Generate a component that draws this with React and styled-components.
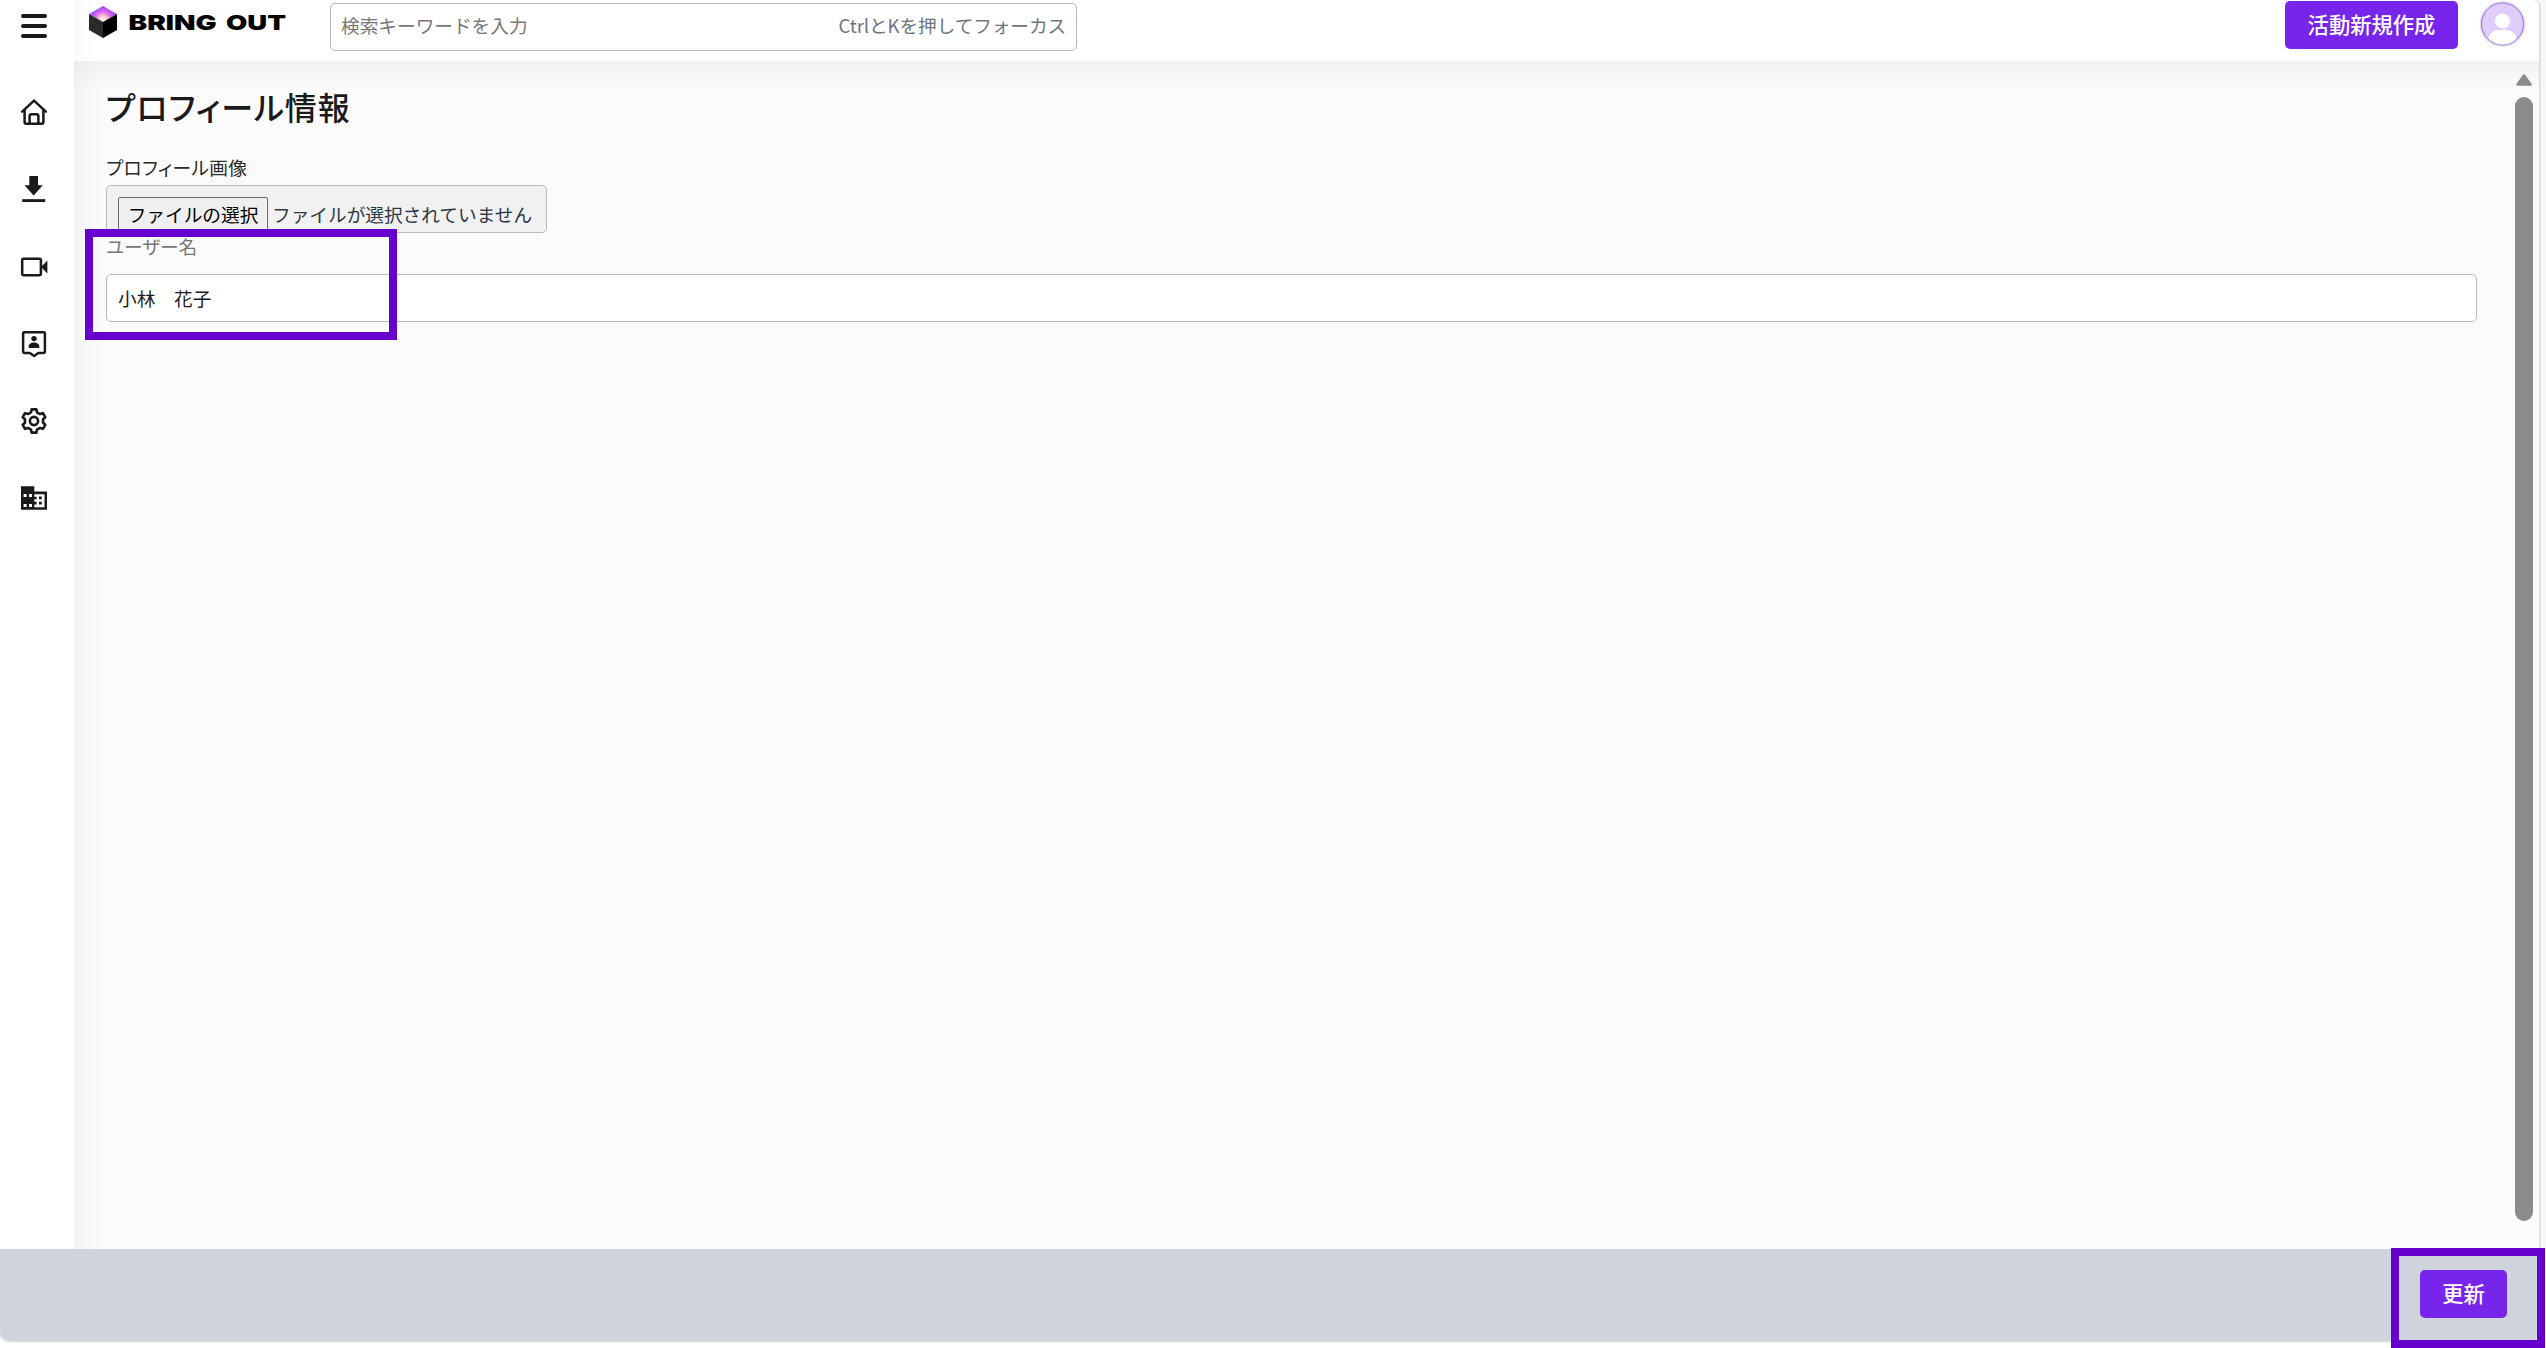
import React from "react";
import styled, { createGlobalStyle } from "styled-components";

const GlobalStyle = createGlobalStyle`
  * { box-sizing: border-box; }
  html, body { margin: 0; padding: 0; background: #fff; }
  body, input, button {
    font-family: "Noto Sans CJK JP", "Noto Sans", sans-serif;
  }
  body { overflow: hidden; }
`;

const Page = styled.div`
  position: relative;
  width: 2546px;
  height: 1348px;
  overflow: hidden;
  background: linear-gradient(90deg, #fff 2539px, #f7f7f7 2539px);
`;

const Shell = styled.div`
  display: flex;
  flex-direction: column;
  width: 2539px;
  height: 1341px;
  overflow: hidden;
  background: #fff;
  border-radius: 0 6px 10px 10px;
  box-shadow: 0 0 2px 1px rgba(0, 0, 0, 0.18);
`;

const Body = styled.div`
  display: flex;
  height: 1249px;
`;

const Sidebar = styled.nav`
  display: flex;
  flex-direction: column;
  align-items: center;
  width: 74px;
  padding: 11px 6px 0 0;
  color: #1a1a1a;
`;

const NavItem = styled.a`
  display: flex;
  flex: none;
  margin-top: ${(p) => p.$gap}px;
  svg { display: block; }
`;

const Main = styled.div`
  display: flex;
  flex-direction: column;
  flex: 1;
`;

const Header = styled.header`
  display: flex;
  align-items: flex-start;
  height: 61px;
  background: linear-gradient(90deg, #fbfbfb, #fff 26px);
`;

const Logo = styled.a`
  display: block;
  margin: 5px 0 0 14px;
  width: 242px;
  height: 36px;
  svg { display: block; }
`;

const SearchBox = styled.div`
  display: flex;
  align-items: center;
  justify-content: space-between;
  width: 747px;
  height: 48px;
  margin-top: 3px;
  padding: 0 10px;
  border: 1px solid #b9b9b9;
  border-radius: 5px;
  background: #fff;
`;

const Hint = styled.span`
  font-size: 18.67px;
  line-height: 42px;
  padding-bottom: 4px;
  letter-spacing: ${(p) => p.$track}px;
  color: ${(p) => p.$color};
  white-space: nowrap;
`;

const Button = styled.button`
  display: flex;
  align-items: center;
  justify-content: center;
  width: ${(p) => p.$w}px;
  height: 48px;
  padding: 0 0 4px;
  border: 0;
  border-radius: 5px;
  background: #7724eb;
  color: #fff;
  font-size: 21.3px;
  font-weight: 500;
  white-space: nowrap;
`;

const HeaderActions = styled.div`
  display: flex;
  gap: 21px;
  margin-left: auto;
  padding: 1px 13px 0 0;
  svg { display: block; }
`;

const Content = styled.main`
  display: flex;
  flex: 1;
  background:
    linear-gradient(180deg, rgba(0, 0, 0, 0.035), transparent 30px),
    linear-gradient(90deg, rgba(0, 0, 0, 0.03), transparent 28px),
    #fbfbfb;
`;

const Form = styled.form`
  display: flex;
  flex-direction: column;
  align-items: flex-start;
  width: 2404px;
  padding: 22px 0 0 32px;
`;

const Title = styled.h1`
  margin: 0;
  height: 46px;
  font-size: 32px;
  line-height: 46px;
  font-weight: 500;
  font-feature-settings: "palt" 1;
  letter-spacing: 1px;
  color: #1a1a1a;
  white-space: nowrap;
`;

const Label = styled.label`
  height: 28px;
  margin-top: ${(p) => p.$top}px;
  font-size: 18.67px;
  line-height: 28px;
  font-feature-settings: "palt" 1;
  letter-spacing: ${(p) => p.$track || 0}px;
  color: ${(p) => p.$color};
  white-space: nowrap;
`;

const FileField = styled.div`
  display: flex;
  width: 441px;
  height: 48px;
  margin-top: 4px;
  padding: 11px 0 0 11px;
  overflow: hidden;
  border: 1px solid #b9b9b9;
  border-radius: 5px;
  background: #f1f1f1;
`;

const FileButton = styled.span`
  flex: none;
  width: 150px;
  height: 40px;
  border: 1px solid #6b6b6b;
  border-radius: 2px;
  background: #efefef;
  color: #000;
  font-size: 18.67px;
  line-height: 32px;
  text-align: center;
  white-space: nowrap;
`;

const FileStatus = styled.span`
  margin-left: 4px;
  padding-top: 1px;
  font-size: 18.67px;
  line-height: 32px;
  color: #2b3947;
  white-space: nowrap;
`;

const TextInput = styled.input`
  width: 2371px;
  height: 48px;
  margin-top: 14px;
  padding: 0 11px 1px;
  border: 1px solid #b9b9b9;
  border-radius: 5px;
  background: #fff;
  color: #1a1a1a;
  font-size: 18.67px;
  outline: 0;
`;

const ScrollTrack = styled.div`
  display: flex;
  flex-direction: column;
  align-items: center;
  width: 18px;
  margin-left: 37px;
  padding-top: 13px;
  svg { display: block; }
`;

const ScrollThumb = styled.div`
  width: 18px;
  height: 1124px;
  margin-top: 11px;
  border-radius: 9px;
  background: #8b8b8b;
`;

const Footer = styled.footer`
  display: flex;
  justify-content: flex-end;
  height: 92px;
  padding: 21px 32px 0 0;
  background: #cfd3db;
`;

const Highlight = styled.div`
  position: absolute;
  left: ${(p) => p.$x}px;
  top: ${(p) => p.$y}px;
  width: ${(p) => p.$w}px;
  height: ${(p) => p.$h}px;
  border: 8px solid #6600cc;
  pointer-events: none;
`;

const Icon = ({ children }) => (
  <svg width="30" height="30" viewBox="0 0 30 30" fill="none" stroke="currentColor">{children}</svg>
);

const MenuIcon = () => (
  <Icon><path d="M4 5h22M4 15h22M4 25h22" strokeWidth="4" strokeLinecap="round" /></Icon>
);

const HomeIcon = () => (
  <Icon>
    <g strokeWidth="2.5" strokeLinecap="round" strokeLinejoin="round">
      <path d="M3.2 14.6 15 3.6l11.8 11" />
      <path d="M5.6 13v12.1a1.6 1.6 0 0 0 1.6 1.6h15.6a1.6 1.6 0 0 0 1.6-1.6V13" />
      <path d="M10.6 26.5v-7.3a2 2 0 0 1 2-2h4.8a2 2 0 0 1 2 2v7.3" />
    </g>
  </Icon>
);

const DownloadIcon = () => (
  <Icon>
    <path d="M10.3 2h8.7v9.3h4.7L14.7 21.5 5.5 11.3h4.8z" fill="currentColor" stroke="none" />
    <path d="M3.2 26.6h23" strokeWidth="2.9" />
  </Icon>
);

const VideoIcon = () => (
  <Icon>
    <rect x="3.2" y="6.7" width="18.7" height="16.6" rx="1.2" strokeWidth="2.5" />
    <path d="M22 15 28.4 8.6v12.8z" fill="currentColor" stroke="none" />
  </Icon>
);

const ContactIcon = () => (
  <Icon>
    <path d="M5.2 3.2h19.6a1.1 1.1 0 0 1 1.1 1.1v18.5a1.1 1.1 0 0 1-1.1 1.1h-5.4L15.1 27l-4.3-3.1H5.2a1.1 1.1 0 0 1-1.1-1.1V4.3a1.1 1.1 0 0 1 1.1-1.1z" strokeWidth="2.5" strokeLinejoin="round" />
    <circle cx="15" cy="9.6" r="2.7" fill="currentColor" stroke="none" />
    <path d="M9.7 19v-1.6c0-2.3 2.7-3.8 5.3-3.8s5.3 1.5 5.3 3.8V19z" fill="currentColor" stroke="none" />
  </Icon>
);

const gearPath = (() => {
  const pts = [];
  for (let i = 0; i < 6; i += 1) {
    [[-0.33, 9.2], [-0.2, 11.9], [0.2, 11.9], [0.33, 9.2]].forEach(([da, r]) => {
      const a = -Math.PI / 2 + (i * Math.PI) / 3 + da;
      pts.push(`${(15 + r * Math.cos(a)).toFixed(2)} ${(15 + r * Math.sin(a)).toFixed(2)}`);
    });
  }
  return `M${pts.join("L")}Z`;
})();

const GearIcon = () => (
  <Icon>
    <path d={gearPath} strokeWidth="2.6" strokeLinejoin="round" />
    <circle cx="15" cy="15" r="4.1" strokeWidth="2.6" />
  </Icon>
);

const BuildingIcon = () => (
  <Icon>
    <path
      d="M2 3.3h13.3v5.3H28v18.1H2z M4.6 11v3h3v-3z M10 11v3h3v-3z M4.6 21v3h3v-3z M10 21v3h3v-3z M15.3 11.2v2.5h2.3v2.5h-2.3v2.6h2.3v2.6h-2.3v2.8h10.2v-13z"
      fill="currentColor" stroke="none" fillRule="evenodd"
    />
    <path d="M20 13.6h2.8v2.6H20zM20 18.8h2.8v2.6H20z" fill="currentColor" stroke="none" />
  </Icon>
);

const BrandWord = ({ x, width, children }) => (
  <text
    x={x} y="24.5" textLength={width} lengthAdjust="spacingAndGlyphs"
    fontFamily="Inter, sans-serif" fontWeight="900" fontSize="20.8" fill="#000"
  >{children}</text>
);

const BrandLogo = () => (
  <svg width="200" height="36" viewBox="0 0 200 36">
    <defs>
      <radialGradient id="cubeTop" gradientUnits="userSpaceOnUse" cx="15" cy="15" r="14">
        <stop offset="0" stopColor="#fff8ea" />
        <stop offset="0.25" stopColor="#ffd3c8" />
        <stop offset="0.6" stopColor="#dc66f4" />
        <stop offset="1" stopColor="#9a48f5" />
      </radialGradient>
    </defs>
    <path d="M15 1 29 9 15 17 1 9z" fill="url(#cubeTop)" />
    <path d="M1 9 15 17v16L1 25z" fill="#2a2a2a" />
    <path d="M29 9 15 17v16l14-8z" fill="#000" />
    <BrandWord x="40.5" width="88">BRING</BrandWord>
    <BrandWord x="138" width="60">OUT</BrandWord>
  </svg>
);

const Avatar = () => (
  <svg width="47" height="47" viewBox="0 0 47 47">
    <defs><clipPath id="face"><circle cx="23.5" cy="23" r="20.5" /></clipPath></defs>
    <circle cx="23.5" cy="23" r="23" fill="#e2e2e2" />
    <circle cx="23.5" cy="23" r="21" fill="#dfcdfd" stroke="#9a6cf7" />
    <g clipPath="url(#face)" fill="#fff">
      <circle cx="23.5" cy="20" r="7.6" />
      <path d="M9 46v-5c0-7 4-12 10-12h9c6 0 10 5 10 12v5z" />
    </g>
  </svg>
);

const navItems = [
  { Glyph: HomeIcon, gap: 56 },
  { Glyph: DownloadIcon, gap: 47 },
  { Glyph: VideoIcon, gap: 48 },
  { Glyph: ContactIcon, gap: 47 },
  { Glyph: GearIcon, gap: 47 },
  { Glyph: BuildingIcon, gap: 47 },
];

export default function App() {
  return (
    <Page>
      <GlobalStyle />
      <Shell>
        <Body>
          <Sidebar>
            <NavItem $gap={0}><MenuIcon /></NavItem>
            {navItems.map(({ Glyph, gap }, i) => (
              <NavItem key={i} $gap={gap}><Glyph /></NavItem>
            ))}
          </Sidebar>
          <Main>
            <Header>
              <Logo><BrandLogo /></Logo>
              <SearchBox>
                <Hint $track={0} $color="#777">検索キーワードを入力</Hint>
                <Hint $track={-0.1} $color="#6b7680">CtrlとKを押してフォーカス</Hint>
              </SearchBox>
              <HeaderActions>
                <Button $w={173}>活動新規作成</Button>
                <Avatar />
              </HeaderActions>
            </Header>
            <Content>
              <Form>
                <Title>プロフィール情報</Title>
                <Label $top={24} $track={0.4} $color="#2a2a2a">プロフィール画像</Label>
                <FileField>
                  <FileButton>ファイルの選択</FileButton>
                  <FileStatus>ファイルが選択されていません</FileStatus>
                </FileField>
                <Label $top={-1} $color="#777">ユーザー名</Label>
                <TextInput defaultValue="小林　花子" />
              </Form>
              <ScrollTrack>
                <svg width="16" height="12" viewBox="0 0 16 12">
                  <path d="M8 1.5 14.5 10.5h-13z" fill="#8b8b8b" stroke="#8b8b8b" strokeWidth="2.6" strokeLinejoin="round" />
                </svg>
                <ScrollThumb />
              </ScrollTrack>
            </Content>
          </Main>
        </Body>
        <Footer><Button $w={87}>更新</Button></Footer>
      </Shell>
      <Highlight $x={85} $y={229} $w={312} $h={111} />
      <Highlight $x={2391} $y={1248} $w={154} $h={100} />
    </Page>
  );
}
